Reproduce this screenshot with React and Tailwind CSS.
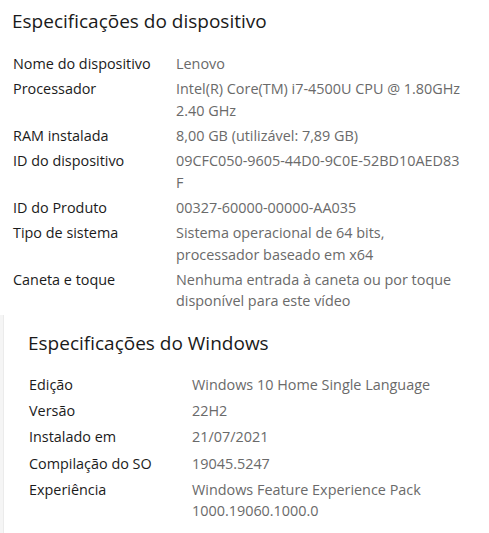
const device = [
  ['Nome do dispositivo', ['Lenovo']],
  ['Processador', ['Intel(R) Core(TM) i7-4500U CPU @ 1.80GHz', '2.40 GHz']],
  ['RAM instalada', ['8,00 GB (utilizável: 7,89 GB)']],
  ['ID do dispositivo', ['09CFC050-9605-44D0-9C0E-52BD10AED83', 'F']],
  ['ID do Produto', ['00327-60000-00000-AA035']],
  ['Tipo de sistema', ['Sistema operacional de 64 bits,', 'processador baseado em x64']],
  ['Caneta e toque', ['Nenhuma entrada à caneta ou por toque', 'disponível para este vídeo']],
];

const windows = [
  ['Edição', ['Windows 10 Home Single Language']],
  ['Versão', ['22H2']],
  ['Instalado em', ['21/07/2021']],
  ['Compilação do SO', ['19045.5247']],
  ['Experiência', ['Windows Feature Experience Pack', '1000.19060.1000.0']],
];

function Specs({ rows, gap }) {
  return (
    <div className={'flex flex-col ' + gap}>
      {rows.map(([label, value]) => (
        <div key={label} className="flex text-[14.4px] leading-[21.2px]">
          <div className="w-[163px] shrink-0 text-[#1b1b1b]">{label}</div>
          <div className="text-[#6a6a6a]">
            {value.map(line => (
              <div key={line} className="whitespace-nowrap">{line}</div>
            ))}
          </div>
        </div>
      ))}
    </div>
  );
}

export default function App() {
  return (
    <div className="w-[489px] h-[533px] overflow-hidden bg-white font-['Open_Sans',sans-serif]">
      <div className="pl-[12px] pt-[7px] h-[315px]">
        <h1 className="text-[19px] leading-[28px] text-[#1a1a1a] mb-[18px]">Especificações do dispositivo</h1>
        <div className="pl-[1px]">
          <Specs rows={device} gap="gap-[4.2px]" />
        </div>
      </div>
      <div className="flex h-[218px]">
        <div className="w-[4px] bg-[#f5f5f5] border-r border-[#ebebeb]" />
        <div className="pl-[24px] pt-[14px]">
          <h2 className="text-[19px] leading-[28px] text-[#1a1a1a] mb-[17px]">Especificações do Windows</h2>
          <div className="pl-[1px]">
            <Specs rows={windows} gap="gap-[5px]" />
          </div>
        </div>
      </div>
    </div>
  );
}
